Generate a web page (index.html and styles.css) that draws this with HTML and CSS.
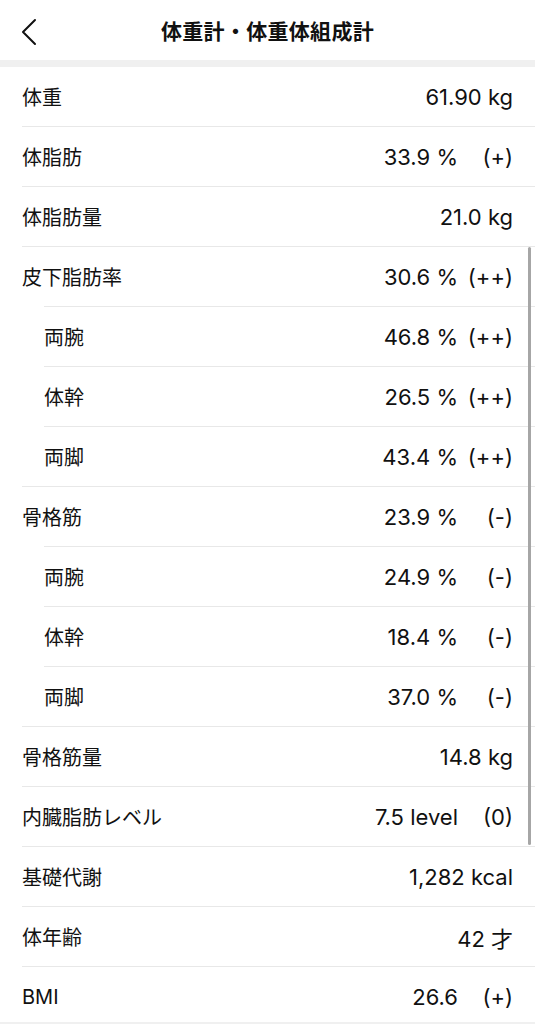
FILE: index.html
```html
<!DOCTYPE html>
<html lang="ja">
<head>
    <meta charset="UTF-8">
    <meta name="viewport" content="width=device-width, initial-scale=1.0">
    <title>体重計・体重体組成計</title>
    <link rel="stylesheet" href="styles.css">
</head>
<body>
    <header class="nav-bar">
        <button class="back-button" aria-label="戻る">
            <svg width="18" height="28" viewBox="0 0 18 28">
                <path d="M15 2 L3 14 L15 26" fill="none" stroke="#111" stroke-width="2" stroke-linecap="round" stroke-linejoin="round"/>
            </svg>
        </button>
        <h1 class="nav-title">体重計・体重体組成計</h1>
    </header>

    <main class="metrics">
        <div class="metric-row">
            <span class="metric-name">体重</span>
            <span class="metric-value">61.90 kg</span>
        </div>
        <div class="metric-row">
            <span class="metric-name">体脂肪</span>
            <span class="metric-value">33.9 %</span>
            <span class="metric-grade">(+)</span>
        </div>
        <div class="metric-row">
            <span class="metric-name">体脂肪量</span>
            <span class="metric-value">21.0 kg</span>
        </div>
        <div class="metric-row">
            <span class="metric-name">皮下脂肪率</span>
            <span class="metric-value">30.6 %</span>
            <span class="metric-grade">(++)</span>
        </div>
        <div class="metric-row sub">
            <span class="metric-name">両腕</span>
            <span class="metric-value">46.8 %</span>
            <span class="metric-grade">(++)</span>
        </div>
        <div class="metric-row sub">
            <span class="metric-name">体幹</span>
            <span class="metric-value">26.5 %</span>
            <span class="metric-grade">(++)</span>
        </div>
        <div class="metric-row sub">
            <span class="metric-name">両脚</span>
            <span class="metric-value">43.4 %</span>
            <span class="metric-grade">(++)</span>
        </div>
        <div class="metric-row">
            <span class="metric-name">骨格筋</span>
            <span class="metric-value">23.9 %</span>
            <span class="metric-grade">(-)</span>
        </div>
        <div class="metric-row sub">
            <span class="metric-name">両腕</span>
            <span class="metric-value">24.9 %</span>
            <span class="metric-grade">(-)</span>
        </div>
        <div class="metric-row sub">
            <span class="metric-name">体幹</span>
            <span class="metric-value">18.4 %</span>
            <span class="metric-grade">(-)</span>
        </div>
        <div class="metric-row sub">
            <span class="metric-name">両脚</span>
            <span class="metric-value">37.0 %</span>
            <span class="metric-grade">(-)</span>
        </div>
        <div class="metric-row">
            <span class="metric-name">骨格筋量</span>
            <span class="metric-value">14.8 kg</span>
        </div>
        <div class="metric-row">
            <span class="metric-name">内臓脂肪レベル</span>
            <span class="metric-value">7.5 level</span>
            <span class="metric-grade">(0)</span>
        </div>
        <div class="metric-row">
            <span class="metric-name">基礎代謝</span>
            <span class="metric-value">1,282 kcal</span>
        </div>
        <div class="metric-row">
            <span class="metric-name">体年齢</span>
            <span class="metric-value">42 才</span>
        </div>
        <div class="metric-row">
            <span class="metric-name">BMI</span>
            <span class="metric-value">26.6</span>
            <span class="metric-grade">(+)</span>
        </div>

        <div class="scroll-indicator"></div>
    </main>
</body>
</html>
```

FILE: styles.css
```css
html, body {
    margin: 0;
    padding: 0;
    height: 100%;
    overflow: hidden;
}
body {
    background-color: #f0f0f0;
    color: #111;
    font-family: Inter, "Noto Sans CJK JP", sans-serif;
}
.nav-bar {
    position: relative;
    height: 60px;
    display: flex;
    align-items: center;
    justify-content: center;
    background-color: #fff;
}
.back-button {
    position: absolute;
    left: 20px;
    top: 18px;
    padding: 0;
    border: none;
    background: none;
    display: flex;
}
.nav-title {
    margin: 0;
    font-size: 21px;
    font-weight: 700;
    letter-spacing: 0.3px;
}
.metrics {
    position: relative;
    margin-top: 7px;
    height: 955px;
    overflow: hidden;
    background-color: #fff;
}
.metric-row {
    display: flex;
    align-items: center;
    height: 59px;
    margin-left: 22px;
    padding-right: 22px;
    border-top: 1px solid #e8e8e8;
    font-size: 22px;
}
.metric-row:first-child {
    border-top: none;
}
.metric-row.sub {
    margin-left: 44px;
}
.metric-name {
    flex: 1;
    font-size: 20px;
}
.metric-value {
    text-align: right;
}
.metric-grade {
    width: 55px;
    text-align: right;
}
.scroll-indicator {
    position: absolute;
    top: 180px;
    left: 528px;
    width: 3px;
    height: 598px;
    border-radius: 2px;
    background-color: #a6a6a6;
}
```
